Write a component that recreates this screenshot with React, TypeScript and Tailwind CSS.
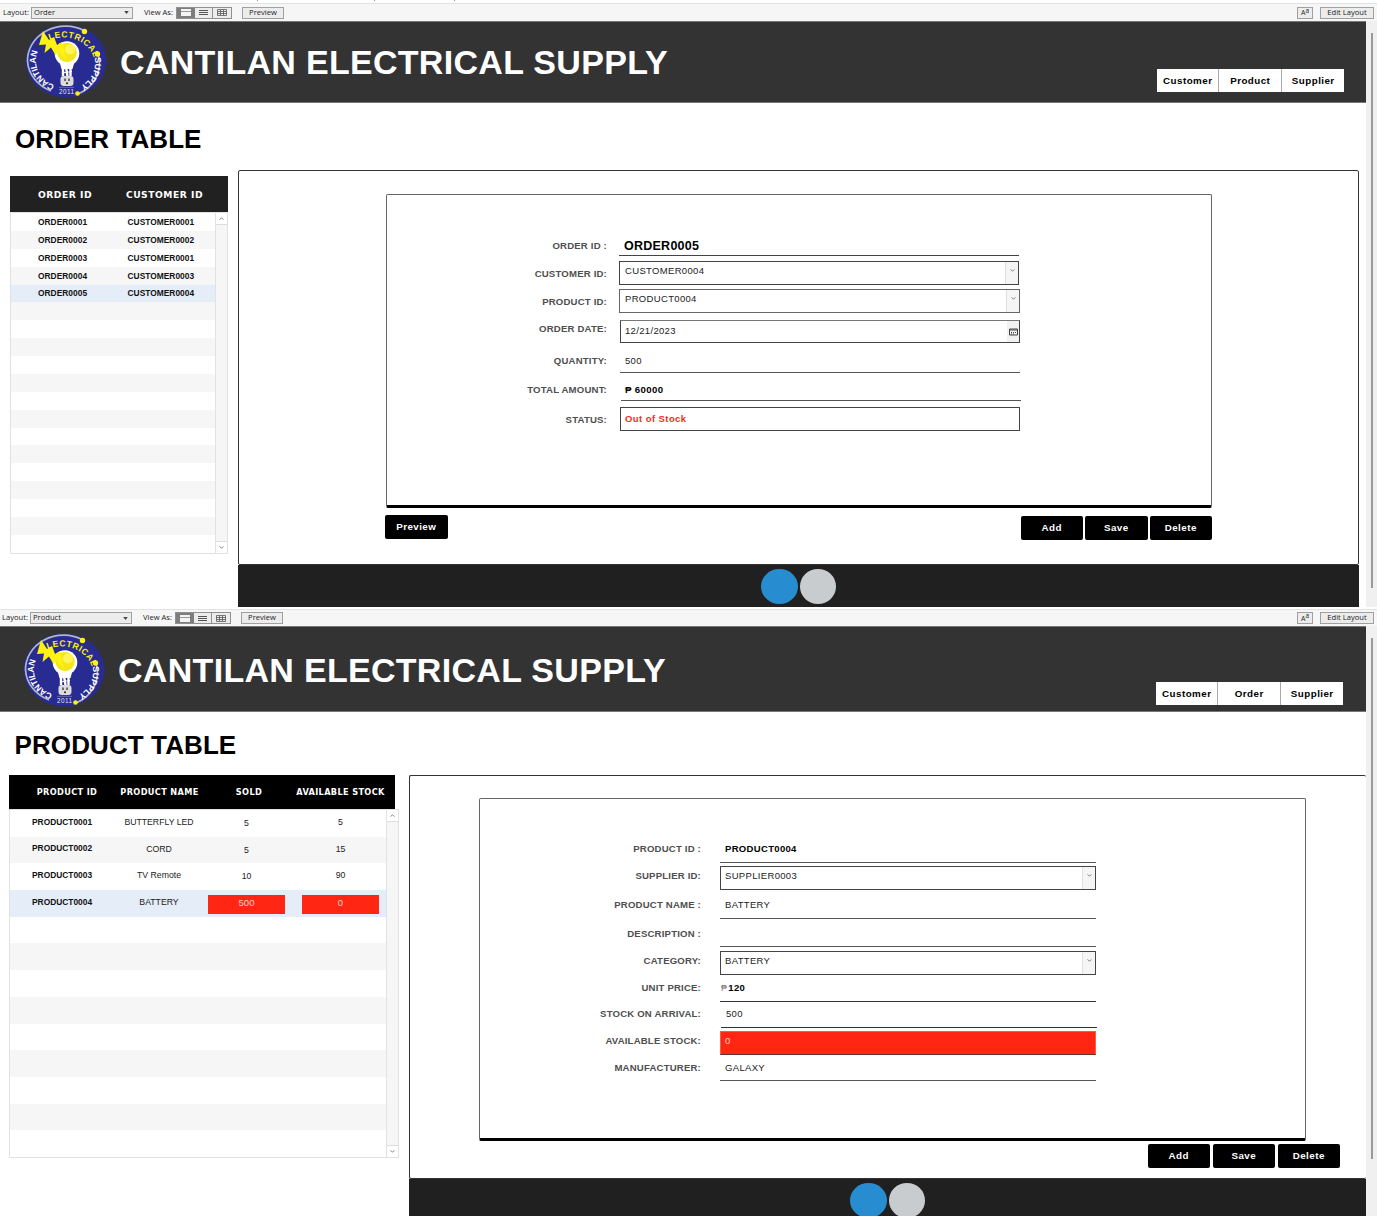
import type { ReactNode } from "react";

function Logo({ id }: { id: string }) {
  return (
    <svg viewBox="0 0 84 76" className="h-[76px] w-[84px] shrink-0">
      <defs>
        <path id={id + "-left"} d="M30.500 62 A29.500 26 0 0 1 14.500 27" fill="none" />
        <path id={id + "-top"} d="M25.500 17 A32 28 0 0 1 70 35" fill="none" />
        <path id={id + "-right"} d="M70.500 34.500 A31 28 0 0 1 53 65" fill="none" />
      </defs>
      <ellipse cx="42" cy="38" rx="40.5" ry="36.5" fill="#272b92" />
      <path d="M60 7.5 A38 34.5 0 0 0 3.500 38 A38 34.5 0 0 0 27 68" fill="none" stroke="#b4b6c4" strokeWidth="1.7" />
      <path d="M74 31 A38 34 0 0 1 54 71" fill="none" stroke="#b4b6c4" strokeWidth="1.7" />
      <circle cx="60.500" cy="8.500" r="2.700" fill="#fff212" />
      <circle cx="73.500" cy="31" r="2.700" fill="#fff212" />
      <circle cx="53.500" cy="70.500" r="2.300" fill="#fff212" />
      <circle cx="43" cy="30.500" r="12.300" fill="#fff" />
      <path d="M35 37 H51 L48.500 46 H37.500 Z" fill="#fff" />
      <circle cx="43" cy="29.500" r="9.700" fill="#f5e616" />
      <circle cx="46" cy="26.500" r="5" fill="#fff45c" />
      <path d="M19 8 L25 17 L30 14 L33 22 L38 19 L42.500 37 L34 29 L31.500 32 L27 24.500 L20.500 30 L22 21.500 L15 22 Z" fill="#fff212" />
      <path d="M39 43 V53 M42 44 L43.500 53 M46.500 43 V53" stroke="#fff" strokeWidth="2.400" />
      <path d="M38 46 L48 44.500 M38 50 L48 48.500" stroke="#fff" strokeWidth="1.200" />
      <rect x="36.500" y="53" width="13" height="10" rx="3.200" fill="#dcdcdc" />
      <path d="M41 55.500 V58 M45 55.500 V58" stroke="#222" strokeWidth="1.200" />
      <circle cx="43" cy="60.300" r="1" fill="#222" />
      <path d="M35 64.300 H50" stroke="#9a9cc0" strokeWidth="0.600" />
      <text x="42.500" y="70.500" textAnchor="middle" fontSize="6.400" fill="#e6e6f0" fontFamily="Liberation Sans" textLength="15">2011</text>
      <g fontFamily="Liberation Sans" fontWeight="700" fontSize="8.600">
        <text fill="#fff"><textPath href={"#" + id + "-left"} textLength="42">CANTILAN</textPath></text>
        <text fill="#fff212"><textPath href={"#" + id + "-top"} textLength="53">LECTRICAL</textPath></text>
        <text fill="#fff"><textPath href={"#" + id + "-right"} textLength="34">SUPPLY</textPath></text>
      </g>
    </svg>
  );
}

function Toolbar({ layout, className }: { layout: string; className: string }) {
  return (
    <div className={"flex items-center border-t border-[#e2e2e2] bg-[#f6f6f6] font-['Open_Sans'] text-[7.6px] leading-none font-medium text-[#222] " + className}>
      <span className="w-[28px] shrink-0 whitespace-nowrap">Layout:</span>
      <div className="flex h-[12px] w-[102px] items-center justify-between border border-[#a0a0a0] bg-[#ececec] px-[2px]">
        <span>{layout}</span>
        <svg viewBox="0 0 6 4" className="mr-px h-[3px] w-[5px]"><path d="M0 0H6L3 4Z" fill="#444" /></svg>
      </div>
      <span className="ml-[11px] w-[32px] whitespace-nowrap">View As:</span>
      <div className="flex h-[12px] w-[56px] border border-[#909090] bg-[#ececec]">
        <div className="flex w-[18px] items-center justify-center bg-[#7d7d7d]">
          <div className="h-[7px] w-[10px] bg-[#f4f4f4]"><div className="h-[3px] border-b border-[#999]" /></div>
        </div>
        <div className="flex w-[18px] flex-col justify-center gap-px border-r border-[#909090] px-1">
          <div className="h-px bg-[#555]" /><div className="h-px bg-[#555]" /><div className="h-px bg-[#555]" />
        </div>
        <div className="flex flex-1 items-center justify-center">
          <svg viewBox="0 0 10 7" className="h-[7px] w-[10px]"><path d="M.5 .5H9.500V6.500H.5ZM.5 2.500H9.500M.5 4.500H9.500M3.500 1V6M6.500 1V6" fill="none" stroke="#555" strokeWidth=".8" /></svg>
        </div>
      </div>
      <div className="ml-[10px] flex h-[12px] w-[42px] items-center justify-center border border-[#a0a0a0] bg-[#ececec]">Preview</div>
      <div className="ml-auto flex h-[12px] w-[16px] items-center justify-center border border-[#a0a0a0] bg-[#ececec] text-[7px]">A<span className="-mt-[3px] text-[6.5px]">a</span></div>
      <div className="mr-[3px] ml-[7px] flex h-[12px] w-[54px] items-center justify-center border border-[#a0a0a0] bg-[#ececec] whitespace-nowrap">Edit Layout</div>
    </div>
  );
}

function Header({ id, nav, className, logoClass, titleClass, navClass }: { id: string; nav: string[]; className: string; logoClass: string; titleClass: string; navClass: string }) {
  return (
    <header className={"flex shrink-0 border-y border-[#777] bg-[#333] " + className}>
      <div className={logoClass}><Logo id={id} /></div>
      <h1 className={"text-[34px] leading-[40px] font-bold tracking-[0.3px] whitespace-nowrap text-white " + titleClass}>CANTILAN ELECTRICAL SUPPLY</h1>
      <nav className={"ml-auto flex h-[23px] divide-x divide-[#aaa] bg-white " + navClass}>
        {nav.map((n) => (
          <button key={n} className="flex w-[62.500px] items-center justify-center pt-px pl-px text-[9.8px] font-bold tracking-[0.45px] text-black">{n}</button>
        ))}
      </nav>
    </header>
  );
}

function Chevron({ up }: { up?: boolean }) {
  return (
    <svg viewBox="0 0 6 4" className="h-[3px] w-[5px]">
      <path d={up ? "M.5 3.500L3 1L5.500 3.500" : "M.5 .5L3 3L5.500 .5"} fill="none" stroke="#555" strokeWidth="1" />
    </svg>
  );
}

function ListScrollbar() {
  return (
    <div className="flex w-[13px] flex-col justify-between border-x border-[#e2e2e2] bg-[#f6f6f6]">
      <div className="flex h-[12px] items-center justify-center border-b border-[#ddd] bg-white"><Chevron up /></div>
      <div className="flex h-[12px] items-center justify-center border-t border-[#ddd] bg-white"><Chevron /></div>
    </div>
  );
}

function PageScrollbar({ thumb }: { thumb: string }) {
  return (
    <div className="flex w-[11px] shrink-0 justify-center bg-[#f0f0f0]">
      <div className={"w-[2px] bg-[#9a9a9a] " + thumb} />
    </div>
  );
}

function Row({ label, row, labelClass, field, children, end }: { label: string; row: string; labelClass: string; field: string; children?: ReactNode; end?: ReactNode }) {
  return (
    <div className={"flex text-[9.5px] leading-[12px] tracking-[0.33px] text-[#222] " + row}>
      <div className={"shrink-0 text-right text-[9.6px] font-bold tracking-[0.18px] text-[#4f4f4f] " + labelClass}>{label}</div>
      <div className={"flex shrink-0 justify-between " + field}>
        <span>{children}</span>
        {end}
      </div>
    </div>
  );
}

function DropEnd() {
  return <div className="-mt-[3px] flex w-[13px] justify-center border-l border-[#e0e0e0] bg-[#f5f5f5] pt-[7px]"><Chevron /></div>;
}

function ActionButton({ children }: { children: ReactNode }) {
  return <button className="flex h-[24px] w-[62.500px] items-center justify-center rounded-[2px] bg-black text-[9.8px] font-bold tracking-[0.45px] text-white">{children}</button>;
}

function Dots({ className }: { className: string }) {
  return (
    <div className={"flex gap-[2px] bg-[#202020] " + className}>
      <div className="h-[35px] w-[36.500px] rounded-[50%] bg-[#278dd0]" />
      <div className="h-[35px] w-[36.500px] rounded-[50%] bg-[#c9cccf]" />
    </div>
  );
}

const orders = ["0001", "0002", "0001", "0003", "0004"];
const products = [
  ["PRODUCT0001", "BUTTERFLY LED", "5", "5"],
  ["PRODUCT0002", "CORD", "5", "15"],
  ["PRODUCT0003", "TV Remote", "10", "90"],
  ["PRODUCT0004", "BATTERY", "500", "0"],
];

function OrderScreen() {
  return (
    <section className="flex h-[607px] flex-col">
      <div className="flex h-[3px] items-start">
        <div className="ml-[257px] h-px w-px bg-[#999]" />
        <div className="ml-[116px] h-px w-px bg-[#999]" />
        <div className="ml-[79px] h-px w-px bg-[#999]" />
      </div>
      <Toolbar layout="Order" className="h-[18px] pl-[3px]" />
      <div className="flex min-h-0 flex-1">
        <div className="flex w-[1366px] flex-col">
          <Header id="a" nav={["Customer", "Product", "Supplier"]} className="h-[82px]" logoClass="ml-[24px] mt-px" titleClass="ml-[12px] mt-[20px]" navClass="mt-[47px] mr-[22px]" />
          <div className="flex flex-1">
            <div className="w-[238px]">
              <h2 className="mt-[20px] ml-[15px] text-[26px] leading-[32px] font-bold tracking-[0.06px] whitespace-nowrap text-black">ORDER TABLE</h2>
              <div className="mt-[21px] ml-[10px] w-[218px]">
                <div className="flex h-[36px] items-center bg-[#212121] pt-[2px] font-['DejaVu_Sans'] text-[9.2px] font-bold tracking-[0.5px] whitespace-nowrap text-white">
                  <span className="w-[110px] text-center">ORDER ID</span>
                  <span className="w-[89px] text-center">CUSTOMER ID</span>
                </div>
                <div className="flex h-[342px] border-y border-l border-[#e2e2e2]">
                  <div className="flex-1 overflow-hidden">
                    {Array.from({ length: 19 }, (_, i) => (
                      <div key={i} className={"flex h-[17.880px] items-center pt-[0.5px] text-[8.4px] font-bold tracking-[0.02px] text-[#111] " + (i === 4 ? "bg-[#e5edf9]" : i % 2 ? "bg-[#f6f6f6]" : "bg-white")}>
                        {i < 5 && (
                          <>
                            <span className="w-[89px] pl-[27px]">ORDER000{i + 1}</span>
                            <span className="ml-[27.500px]">CUSTOMER{orders[i]}</span>
                          </>
                        )}
                      </div>
                    ))}
                  </div>
                  <ListScrollbar />
                </div>
              </div>
            </div>
            <div className="mt-[67px] flex w-[1121px] flex-col">
              <div className="flex-1 rounded-[2px] border border-[#333] px-[147px] pt-[23px]">
                <div className="h-[314px] w-[826px] rounded-[2px] border border-b-[3px] border-[#666] border-b-black pt-[38px]">
                  <Row label="ORDER ID :" row="h-[23px]" labelClass="w-[220px] pt-[7px]" field="ml-[12px] w-[400px] border-b border-[#444] pl-[5px] pt-[7px] text-[12.5px] tracking-[0.25px] font-bold text-black">ORDER0005</Row>
                  <Row label="CUSTOMER ID:" row="mt-[5px] h-[24px]" labelClass="w-[220px] pt-[7px]" field="ml-[12px] w-[400px] border border-[#444] pl-[5px] pt-[3px]" end={<DropEnd />}>CUSTOMER0004</Row>
                  <Row label="PRODUCT ID:" row="mt-[4px] h-[24px]" labelClass="w-[220px] pt-[7px]" field="ml-[12px] w-[401px] border border-[#666] pl-[5px] pt-[3px]" end={<DropEnd />}>PRODUCT0004</Row>
                  <Row label="ORDER DATE:" row="mt-[7px] h-[23px]" labelClass="w-[220px] pt-[3px]" field="ml-[13px] w-[400px] border border-[#444] border-t-[#777] pl-[4px] pt-[4px]" end={
                    <div className="-mt-[4px] flex w-[12px] items-center justify-center bg-[#f2f2f2]">
                      <svg viewBox="0 0 9 8" className="h-[8px] w-[9px]"><path d="M.5 1H8.500V7H.5ZM.5 2H8.500M2 4.500H3M4 4.500H5M6 4.500H7M2 6H3M4 6H5" fill="none" stroke="#444" /></svg>
                    </div>
                  }>12/21/2023</Row>
                  <Row label="QUANTITY:" row="mt-[7px] h-[23px]" labelClass="w-[220px] pt-[5px]" field="ml-[13px] w-[400px] border-b border-[#555] pl-[5px] pt-[5px]">500</Row>
                  <Row label="TOTAL AMOUNT:" row="mt-[5px] h-[23px]" labelClass="w-[220px] pt-[6px]" field="ml-[14px] w-[400px] border-b border-[#555] pl-[4px] pt-[6px] text-[9.6px] tracking-[0.4px] font-bold text-black">₱ 60000</Row>
                  <Row label="STATUS:" row="mt-[6px] h-[24px]" labelClass="w-[220px] pt-[7px]" field="ml-[13px] w-[400px] border border-[#444] pl-[4px] pt-[5px] tracking-[0.42px] font-bold text-[#fb2a1c]">Out of Stock</Row>
                </div>
                <div className="mt-[7px] flex w-[826px] gap-[2px]">
                  <div className="mr-auto -ml-px"><ActionButton>Preview</ActionButton></div>
                  <div className="mt-px flex gap-[2px]">
                    <ActionButton>Add</ActionButton>
                    <ActionButton>Save</ActionButton>
                    <ActionButton>Delete</ActionButton>
                  </div>
                </div>
              </div>
              <Dots className="h-[42px] pt-[4px] pl-[523px]" />
            </div>
          </div>
        </div>
        <PageScrollbar thumb="mt-[12px] h-[555px]" />
      </div>
    </section>
  );
}

function ProductScreen() {
  const line = "ml-[19px] w-[376px] border-b border-[#555] pl-[5px] ";
  const box = "ml-[19px] w-[376px] border border-[#444] pl-[4px] ";
  return (
    <section className="flex h-[609px] flex-col overflow-hidden pt-[2px]">
      <Toolbar layout="Product" className="h-[17px] shrink-0 pl-[2px]" />
      <div className="flex min-h-0 flex-1">
        <div className="flex w-[1366px] flex-col">
          <Header id="b" nav={["Customer", "Order", "Supplier"]} className="h-[86px]" logoClass="ml-[22px] mt-[5px]" titleClass="ml-[12px] mt-[23px]" navClass="mt-[55px] mr-[23px]" />
          <div className="flex flex-1">
            <div className="w-[409px]">
              <h2 className="mt-[17px] ml-[14.500px] text-[26px] leading-[32px] font-bold tracking-[0.1px] whitespace-nowrap text-black">PRODUCT TABLE</h2>
              <div className="mt-[14px] ml-[9px] w-[390px]">
                <div className="flex h-[34px] w-[386px] items-center bg-black pl-[18px] font-['DejaVu_Sans'] text-[8.2px] font-bold tracking-[0.35px] whitespace-nowrap text-white">
                  <span className="w-[80px] text-center">PRODUCT ID</span>
                  <span className="w-[105px] text-center">PRODUCT NAME</span>
                  <span className="w-[74px] text-center">SOLD</span>
                  <span className="w-[109px] text-center">AVAILABLE STOCK</span>
                </div>
                <div className="flex h-[349px] border-y border-l border-[#e2e2e2]">
                  <div className="flex-1 overflow-hidden">
                    {Array.from({ length: 13 }, (_, i) => {
                      const p = products[i];
                      return (
                        <div key={i} className={"flex h-[26.700px] text-[8.7px] leading-[12px] text-[#222] " + (i === 3 ? "bg-[#e5edf9]" : i % 2 ? "bg-[#f6f6f6]" : "bg-white")}>
                          {p && (
                            <>
                              <span className="w-[105px] pt-[5.500px] pl-[22px] text-[8.4px] font-bold text-[#111]">{p[0]}</span>
                              <span className="w-[88px] pt-[6px] text-center">{p[1]}</span>
                              <span className={i === 3 ? "mt-[5px] ml-[5px] h-[19px] w-[77px] bg-[#ff2713] pt-[2px] text-center text-[9.5px] text-[#ffd0c8]" : "ml-[5px] w-[77px] pt-[7px] text-center"}>{p[2]}</span>
                              <span className={i === 3 ? "mt-[5px] ml-[17px] h-[19px] w-[77px] bg-[#ff2713] pt-[2px] text-center text-[9.5px] text-[#ffd0c8]" : "ml-[17px] w-[77px] pt-[6px] text-center"}>{p[3]}</span>
                            </>
                          )}
                        </div>
                      );
                    })}
                  </div>
                  <ListScrollbar />
                </div>
              </div>
            </div>
            <div className="mt-[63px] flex w-[957px] flex-col">
              <div className="h-[404px] shrink-0 rounded-[2px] border border-r-0 border-[#333] pt-[22px]">
                <div className="ml-[69px] h-[343px] w-[827px] rounded-[2px] border border-b-[3px] border-[#666] border-b-black pt-[41px]">
                  <Row label="PRODUCT ID :" row="h-[23px]" labelClass="w-[221px] pt-[3px]" field={line + "pt-[3px] font-bold text-black"}>PRODUCT0004</Row>
                  <Row label="SUPPLIER ID:" row="mt-[3px] h-[24px]" labelClass="w-[221px] pt-[4px]" field={box + "pt-[3px]"} end={<DropEnd />}>SUPPLIER0003</Row>
                  <Row label="PRODUCT NAME :" row="mt-[6px] h-[23px]" labelClass="w-[221px] pt-[3px]" field={line + "pt-[3px]"}>BATTERY</Row>
                  <Row label="DESCRIPTION :" row="mt-[5px] h-[23px]" labelClass="w-[221px] pt-[4px]" field={line} />
                  <Row label="CATEGORY:" row="mt-[4px] h-[24px]" labelClass="w-[221px] pt-[4px]" field={box + "pt-[3px]"} end={<DropEnd />}>BATTERY</Row>
                  <Row label="UNIT PRICE:" row="mt-[4px] h-[23px]" labelClass="w-[221px] pt-[3px]" field="ml-[19px] w-[376px] border-b border-[#333] pl-px pt-[3px] font-bold text-black"><span className="mr-px text-[9px] font-normal text-[#777]">₱</span>120</Row>
                  <Row label="STOCK ON ARRIVAL:" row="mt-[3px] h-[23px]" labelClass="w-[221px] pt-[3px]" field="ml-[20px] w-[376px] border-b border-[#333] pl-[5px] pt-[3px]">500</Row>
                  <Row label="AVAILABLE STOCK:" row="mt-[3px] h-[24px]" labelClass="w-[221px] pt-[4px]" field="ml-[19px] w-[376px] border border-[#ff5a48] border-b-[#663333] bg-[#ff2713] pl-[4px] pt-[3px] text-[#ffd0c8]">0</Row>
                  <Row label="MANUFACTURER:" row="mt-[3px] h-[23px]" labelClass="w-[221px] pt-[4px]" field={line + "pt-[4px]"}>GALAXY</Row>
                </div>
                <div className="mt-[3px] mr-[26px] flex justify-end gap-[2.500px]">
                  <ActionButton>Add</ActionButton>
                  <ActionButton>Save</ActionButton>
                  <ActionButton>Delete</ActionButton>
                </div>
              </div>
              <Dots className="flex-1 pt-[4px] pl-[441px]" />
            </div>
          </div>
        </div>
        <PageScrollbar thumb="mt-[12px] h-[521px]" />
      </div>
    </section>
  );
}

export default function App() {
  return (
    <main className="h-[1216px] w-[1377px] overflow-hidden bg-white font-['Liberation_Sans',sans-serif]">
      <OrderScreen />
      <ProductScreen />
    </main>
  );
}
